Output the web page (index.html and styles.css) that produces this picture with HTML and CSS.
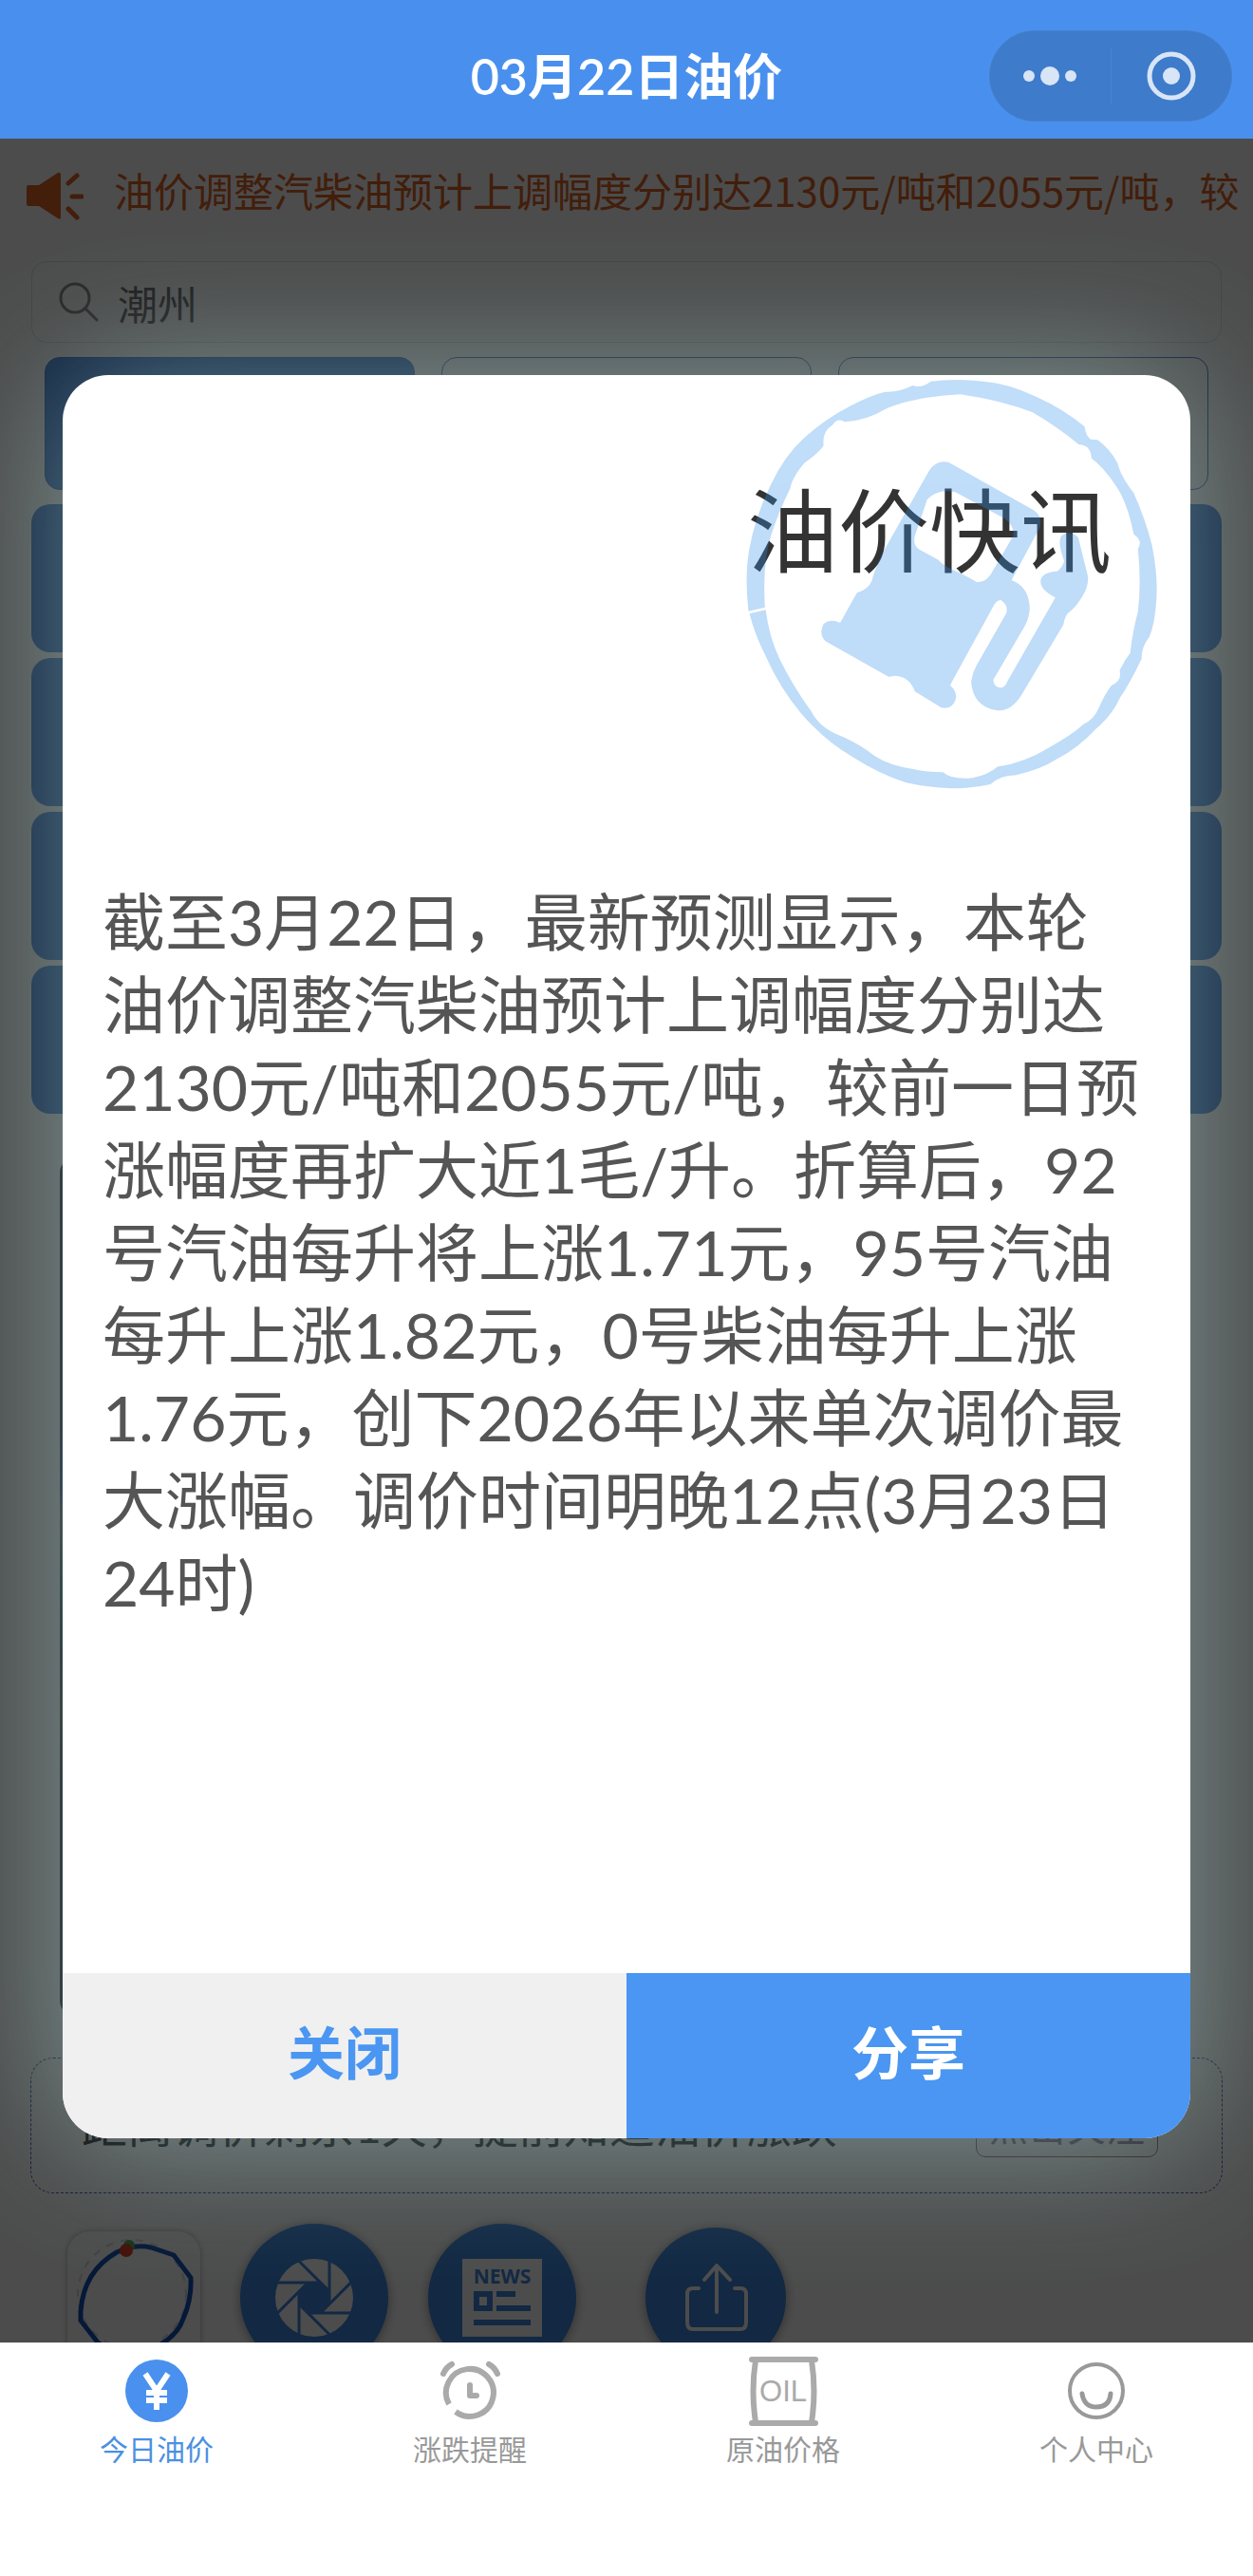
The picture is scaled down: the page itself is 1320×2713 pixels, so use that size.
FILE: index.html
```html
<!DOCTYPE html>
<html lang="zh-CN">
  <head>
    <meta charset="UTF-8">
    <meta name="viewport" content="width=device-width, initial-scale=1.0">
    <title>03月22日油价</title>
    <link rel="stylesheet" href="styles.css">
  </head>

  <body>
    <div class="app">
      <header class="nav-bar">
        <h1>03月22日油价</h1>
        <div class="capsule">
          <button type="button" aria-label="更多">
            <svg width="60" height="60" viewBox="0 0 60 60">
              <circle cx="8" cy="30" r="6"/>
              <circle cx="30" cy="30" r="10"/>
              <circle cx="52" cy="30" r="6"/>
            </svg>
          </button>
          <span class="line"></span>
          <button type="button" aria-label="退出">
            <svg width="60" height="60" viewBox="0 0 60 60">
              <circle cx="30" cy="30" r="23" fill="none" stroke="#d8e5f7" stroke-width="5"/>
              <circle cx="30" cy="30" r="9"/>
            </svg>
          </button>
        </div>
      </header>

      <main class="page">
        <div class="notice">
          <svg width="60" height="64" viewBox="0 -14 60 64">
            <path d="M2 13H13L33 0Q36-1 36 2V47Q36 50 33 48L13 35H2Q0 35 0 33V15Q0 13 2 13Z" fill="currentColor"/>
            <path d="M44 11L53 3M48 25H58M44 38L53 47" fill="none" stroke="currentColor" stroke-width="5" stroke-linecap="round"/>
          </svg>
          <p>油价调整汽柴油预计上调幅度分别达2130元/吨和2055元/吨，较</p>
        </div>

        <div class="search">
          <svg width="42" height="42" viewBox="0 0 42 42" fill="none" stroke="#888" stroke-width="3" stroke-linecap="round">
            <circle cx="17" cy="17" r="15"/>
            <path d="M28 28L40 40"/>
          </svg>
          <input type="text" value="潮州" aria-label="城市">
        </div>

        <div class="types">
          <div class="active"></div>
          <div></div>
          <div></div>
        </div>
        <ul class="prices">
          <li></li>
          <li></li>
          <li></li>
          <li></li>
        </ul>
        <div class="banner"></div>

        <div class="remind">
          <p>距离调价剩余1天，提前知道油价涨跌</p>
          <button type="button">点击关注</button>
        </div>

        <div class="tools">
          <button type="button" class="tool-box" aria-label="画圆">
            <svg width="140" height="140" viewBox="0 0 140 140" fill="none">
              <circle cx="68" cy="66" r="57" stroke="#d5d9e0" stroke-width="2" stroke-dasharray="8 8"/>
              <path d="M62 18Q76 14 88 17L112 25L130 49Q131 72 122 92Q114 116 78 128Q50 130 32 117L14 94V84Q17 42 52 22Z" stroke="#1652b8" stroke-width="5"/>
              <circle cx="65" cy="15" r="6" fill="#4caf50"/>
              <circle cx="62" cy="20" r="7" fill="#e53923"/>
            </svg>
          </button>
          <button type="button" class="tool-round" aria-label="识图">
            <svg width="156" height="156" viewBox="-78 -78 156 156">
              <circle r="41" fill="#fff"/>
              <circle r="16" fill="#3d86df"/>
              <g stroke="#3d86df" stroke-width="3">
                <path d="M16-42V7"/>
                <path d="M16-42V7" transform="rotate(45)"/>
                <path d="M16-42V7" transform="rotate(90)"/>
                <path d="M16-42V7" transform="rotate(135)"/>
                <path d="M16-42V7" transform="rotate(180)"/>
                <path d="M16-42V7" transform="rotate(225)"/>
                <path d="M16-42V7" transform="rotate(270)"/>
                <path d="M16-42V7" transform="rotate(315)"/>
              </g>
            </svg>
          </button>
          <button type="button" class="tool-round" aria-label="新闻">
            <svg width="156" height="156" viewBox="0 0 156 156" fill="#3d86df">
              <path d="M36 37H120V119H36Z" fill="#fff"/>
              <text x="78" y="63" class="news" text-anchor="middle">NEWS</text>
              <path d="M48 71H68V92H48ZM54 77V86H62V77Z" fill-rule="evenodd"/>
              <path d="M72 71H92V77H72ZM72 86H108V92H72ZM48 101H108V107H48Z"/>
            </svg>
          </button>
          <button type="button" class="tool-round tool-share" aria-label="分享">
            <svg width="148" height="148" viewBox="0 0 148 148" fill="none" stroke="#fff" stroke-width="4" stroke-linecap="round" stroke-linejoin="round">
              <path d="M75 89V41M62 55L75 40L89 55M56 64H50Q44 64 44 70V100Q44 107 50 107H100Q106 107 106 100V70Q106 64 100 64H94"/>
            </svg>
          </button>
        </div>

        <div class="mask">
          <section class="dialog" role="dialog" aria-labelledby="dialog-title">
            <div class="dialog-head">
              <h2 id="dialog-title">油价快讯</h2>
              <!-- fuel stamp, printed over the title -->
              <svg class="stamp" width="440" height="450" viewBox="0 0 440 450">
                <g transform="translate(-43 -14) scale(.37 .3333)" fill="#3592eb" fill-rule="evenodd">
                  <path d="M650 62Q720 52 800 62Q870 68 950 110Q1030 150 1088 205Q1092 235 1105 245L1125 247Q1160 275 1182 320Q1190 360 1228 415Q1262 500 1280 580Q1298 680 1292 760Q1288 830 1272 870Q1250 900 1250 940Q1215 1020 1190 1060Q1165 1120 1120 1160Q1070 1220 1010 1255Q960 1290 890 1307Q850 1307 820 1335Q770 1348 710 1348Q640 1345 580 1330Q500 1300 430 1250Q350 1200 280 1110Q220 1030 180 930Q148 860 134 796L180 784Q190 870 220 940Q260 1030 310 1105Q335 1160 400 1185Q450 1210 490 1245Q530 1275 600 1287Q640 1297 685 1297Q710 1322 770 1315Q815 1305 840 1280Q920 1265 985 1220Q1050 1180 1085 1145Q1115 1130 1128 1095Q1145 1050 1165 1022Q1195 1010 1188 975Q1200 945 1218 920Q1225 850 1240 790Q1250 700 1240 590Q1255 565 1228 545Q1215 470 1190 415Q1150 340 1108 305Q1105 262 1072 262Q1010 205 940 160Q850 120 735 103Q690 105 640 113Q560 128 520 150Q470 185 405 190Q385 175 370 200Q340 220 345 265Q330 290 290 320Q255 365 250 400Q215 480 195 550Q170 640 178 776L131 788Q120 680 132 600Q150 490 190 400Q230 300 290 240Q350 180 420 140Q480 105 520 95Q560 97 598 75Q625 85 650 62Z"/>
                  <path d="M645 345Q665 310 700 317L945 470Q970 490 960 525L880 690Q930 710 932 780Q930 810 918 835L828 1005Q830 1030 850 1030Q862 1028 868 1010L1005 745Q960 720 963 690Q968 665 1010 662Q1025 650 1030 630Q1010 570 1022 550Q1045 530 1070 555Q1080 600 1098 680Q1098 710 1085 735Q1065 775 1040 795Q1030 810 1028 830L910 1050Q880 1105 840 1102Q770 1090 765 1010Q768 985 780 960L865 795Q872 770 850 753Q840 753 832 765L705 1022Q728 1045 720 1070Q708 1100 680 1093L605 1042Q590 995 550 992L530 995L350 883Q330 860 345 828Q365 810 392 825L440 730Q480 715 485 680Q500 630 520 590ZM640 435Q670 400 720 412L860 495Q890 520 885 550L822 670Q805 700 780 695L735 668Q690 650 670 625L615 592Q598 575 605 550Z"/>
                </g>
              </svg>
            </div>
            <p class="dialog-text">截至3月22日，最新预测显示，本轮油价调整汽柴油预计上调幅度分别达2130元/吨和2055元/吨，较前一日预涨幅度再扩大近1毛/升。折算后，92号汽油每升将上涨1.71元，95号汽油每升上涨1.82元，0号柴油每升上涨1.76元，创下2026年以来单次调价最大涨幅。调价时间明晚12点(3月23日24时)</p>
            <div class="dialog-btns">
              <button type="button" class="btn-close">关闭</button>
              <button type="button" class="btn-share">分享</button>
            </div>
          </section>
        </div>
      </main>

      <nav class="tab-bar">
        <a href="#" class="active">
          <svg width="73" height="73" viewBox="0 0 73 73">
            <circle cx="36" cy="36" r="33" fill="#4a90ee"/>
            <path d="M24 18L36 36L48 18M36 36V56M25 38H47M25 46H47" fill="none" stroke="#fff" stroke-width="6"/>
          </svg>
          <span>今日油价</span>
        </a>
        <a href="#">
          <svg width="73" height="73" viewBox="0 0 73 73" fill="none" stroke="#aaa" stroke-width="6" stroke-linecap="round">
            <path d="M14 50A25 25 0 1 1 21 58" stroke-linecap="butt"/>
            <path d="M8 18Q11 11 17 8M65 18Q62 11 56 8"/>
            <path d="M36 30V41H43" stroke-linejoin="round"/>
          </svg>
          <span>涨跌提醒</span>
        </a>
        <a href="#">
          <svg width="73" height="73" viewBox="0 0 73 73" fill="none" stroke="#aaa" stroke-width="6">
            <path d="M3 3H70M3 70H70" stroke-linecap="round"/>
            <path d="M7 4Q2 36 7 69M66 4Q71 36 66 69"/>
            <text x="36" y="47" class="oil" text-anchor="middle">OIL</text>
          </svg>
          <span>原油价格</span>
        </a>
        <a href="#">
          <svg width="73" height="73" viewBox="0 0 73 73" fill="none" stroke="#999" stroke-width="4" stroke-linecap="round">
            <circle cx="36" cy="36" r="28"/>
            <path d="M21 39Q23 53 36 53Q50 53 51 39" stroke-width="5"/>
          </svg>
          <span>个人中心</span>
        </a>
      </nav>
    </div>
  </body>
</html>
```

FILE: styles.css
```css
* {
  margin: 0;
  padding: 0;
  box-sizing: border-box;
}

body {
  font-family: Lato, "Noto Sans CJK SC", sans-serif;
  background-color: #fff;
}

ul {
  list-style: none;
}

a {
  text-decoration: none;
}

button {
  border: none;
  background: none;
  font-family: inherit;
}

svg {
  display: block;
  flex-shrink: 0;
}

.app {
  display: flex;
  flex-direction: column;
  height: 100vh;
}

/* top bar */
.nav-bar {
  display: grid;
  grid-template-columns: 1fr auto 1fr;
  align-items: center;
  padding: 32px 22px 18px;
  background-color: #4990ee;
}

.nav-bar h1 {
  grid-column: 2;
  font-size: 52px;
  line-height: 72px;
  font-weight: 600;
  color: #fff;
}

.capsule {
  justify-self: end;
  display: flex;
  align-items: center;
  width: 256px;
  height: 96px;
  border: 1px solid #4480cc;
  border-radius: 48px;
  background-color: #3e7bca;
}

.capsule button {
  flex: 1;
  display: flex;
  align-items: center;
  justify-content: center;
}

.capsule .line {
  width: 1px;
  height: 60px;
  background-color: #4984d0;
}

.capsule svg {
  fill: #d8e5f7;
}

/* page */
.page {
  flex: 1;
  min-height: 0;
  position: relative;
  overflow: hidden;
  background-color: #fff;
}

.notice {
  display: flex;
  align-items: center;
  height: 108px;
  padding-left: 28px;
  color: #dc6426;
}

.notice p {
  margin-left: 32px;
  font-family: "Noto Sans CJK SC", sans-serif;
  font-size: 42px;
  line-height: 60px;
  white-space: nowrap;
}

.search {
  display: flex;
  align-items: center;
  height: 86px;
  margin: 21px 33px 0;
  padding: 0 28px;
  border: 1px solid #e0e0e0;
  border-radius: 16px;
}

.search input {
  flex: 1;
  margin-left: 20px;
  border: none;
  outline: none;
  background: none;
  font-family: inherit;
  font-size: 42px;
  color: #666;
}

.types {
  display: flex;
  gap: 28px;
  margin: 15px 47px 0;
}

.types div {
  flex: 1;
  height: 140px;
  border: 1px solid #2f6cc0;
  border-radius: 16px;
}

.types .active {
  background-color: #3a7cd6;
}

.prices {
  display: grid;
  gap: 6px;
  margin: 15px 33px 0;
}

.prices li {
  height: 156px;
  border-radius: 20px;
  background-color: #3a7cd6;
}

.banner {
  height: 904px;
  margin: 46px 66px 0 63px;
  border-radius: 16px;
  background: linear-gradient(#1c2436, #28304a 30%, #2c4a90 38%, #707070 42%, #206060 50%, #24344c 58%, #404838 64%, #303038 70%, #20283c 74%, #28304c);
}

.remind {
  display: flex;
  align-items: center;
  justify-content: space-between;
  height: 143px;
  margin: 44px 32px 0;
  padding: 0 67px 0 53px;
  border: 1px dashed #3a4fa8;
  border-radius: 24px;
}

.remind p {
  font-size: 48px;
  line-height: 72px;
  color: #111;
}

.remind button {
  width: 192px;
  height: 66px;
  padding-bottom: 12px;
  border: 1px solid #805c5c;
  border-radius: 10px;
  font-size: 41px;
  color: #8a6a90;
}

.tools {
  display: flex;
  align-items: center;
  gap: 42px;
  margin: 32px 71px 0;
}

.tool-box {
  border-radius: 24px;
  box-shadow: 0 0 6px rgba(0, 0, 0, .3);
}

.tool-round {
  border-radius: 50%;
  background-color: #3d86df;
  box-shadow: 0 2px 12px rgba(0, 0, 0, .4);
}

.tool-share {
  margin-left: 31px;
}

.news {
  font: bold 21px "Open Sans", sans-serif;
}

/* dialog */
.mask {
  position: absolute;
  inset: 0;
  padding: 249px 66px 0;
  background-color: rgba(0, 0, 0, .7);
}

.dialog {
  display: flex;
  flex-direction: column;
  height: calc(90% - 8px);
  border-radius: 48px;
  overflow: hidden;
  background-color: #fff;
  box-shadow: 0 0 150px rgba(200, 250, 250, .44);
}

.dialog-head {
  position: relative;
  height: 532px;
  padding: 91px 83px 0;
  text-align: right;
}

.dialog-head h2 {
  font-size: 96px;
  line-height: 144px;
  font-weight: 400;
  color: #333;
}

.stamp {
  position: absolute;
  top: 0;
  right: 31px;
  opacity: .31;
}

.dialog-text {
  flex: 1;
  padding: 0 48px 0 42px;
  font-size: 66px;
  line-height: 87px;
  color: #555;
}

.dialog-btns {
  display: flex;
}

.dialog-btns button {
  flex: 1;
  height: 174px;
  padding-bottom: 12px;
  font-size: 60px;
  font-weight: 600;
}

.dialog-btns .btn-close {
  background-color: #f0f0f0;
  color: #4a96f2;
}

.dialog-btns .btn-share {
  background-color: #4a96f2;
  color: #fff;
}

/* bottom tabs */
.tab-bar {
  display: flex;
  height: 246px;
  padding-top: 14px;
  border-top: 1px solid #e5e5e5;
  background-color: #fff;
}

.tab-bar a {
  flex: 1;
  display: flex;
  flex-direction: column;
  align-items: center;
  gap: 3px;
  font-size: 30px;
  line-height: 42px;
  color: #999;
}

.tab-bar .active {
  color: #4a90e2;
}

.oil {
  font: 31px "Liberation Sans", sans-serif;
  fill: #aaa;
  stroke: none;
}
```
